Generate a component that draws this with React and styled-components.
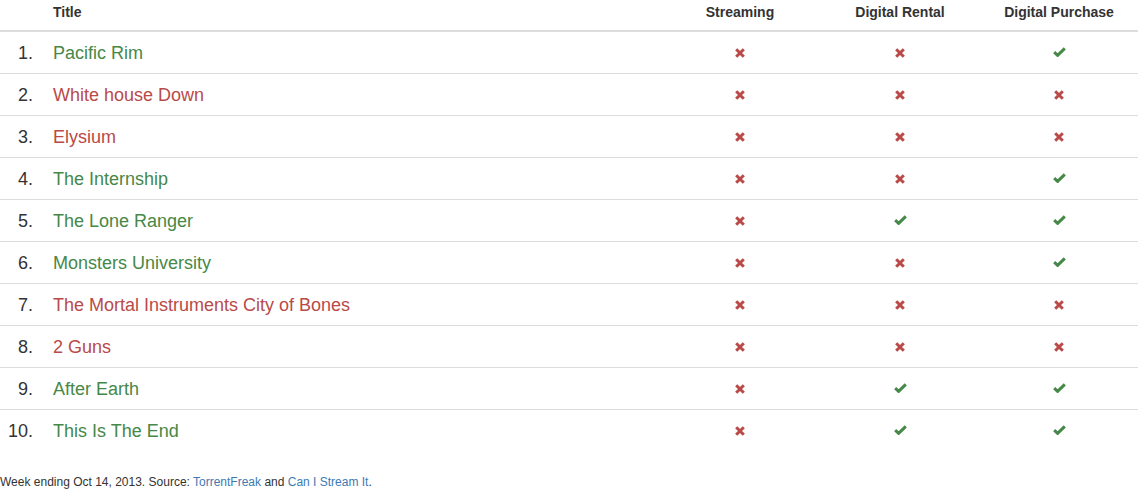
import styled, { createGlobalStyle } from "styled-components";

const movies = [
  { title: "Pacific Rim", streaming: false, rental: false, purchase: true },
  { title: "White house Down", streaming: false, rental: false, purchase: false },
  { title: "Elysium", streaming: false, rental: false, purchase: false },
  { title: "The Internship", streaming: false, rental: false, purchase: true },
  { title: "The Lone Ranger", streaming: false, rental: true, purchase: true },
  { title: "Monsters University", streaming: false, rental: false, purchase: true },
  { title: "The Mortal Instruments City of Bones", streaming: false, rental: false, purchase: false },
  { title: "2 Guns", streaming: false, rental: false, purchase: false },
  { title: "After Earth", streaming: false, rental: true, purchase: true },
  { title: "This Is The End", streaming: false, rental: true, purchase: true },
];

const GREEN = "#468847";
const RED = "#b94a48";

const Mark = ({ ok }) =>
  ok ? (
    <CheckIcon viewBox="0 0 13 10" width="13" height="10">
      <polyline points="1.2,5.2 4.6,8.4 11.8,1.4" fill="none" stroke={GREEN} strokeWidth="3" />
    </CheckIcon>
  ) : (
    <CrossIcon viewBox="0 0 10 10" width="10" height="10">
      <path d="M1.2 1.2 L8.8 8.8 M8.8 1.2 L1.2 8.8" stroke={RED} strokeWidth="3" />
    </CrossIcon>
  );

const App = () => {
  return (
    <>
      <GlobalStyle />
      <Page>
        <Table>
          <colgroup>
            <col style={{ width: 45 }} />
            <col />
            <col style={{ width: 160 }} />
            <col style={{ width: 160 }} />
            <col style={{ width: 158 }} />
          </colgroup>
          <thead>
            <tr>
              <HeadCell />
              <HeadCell>Title</HeadCell>
              <HeadCell $center>Streaming</HeadCell>
              <HeadCell $center>Digital Rental</HeadCell>
              <HeadCell $center>Digital Purchase</HeadCell>
            </tr>
          </thead>
          <tbody>
            {movies.map((m, i) => {
              const available = m.streaming || m.rental || m.purchase;
              return (
                <Row key={m.title}>
                  <RankCell>{i + 1}.</RankCell>
                  <TitleCell $ok={available}>{m.title}</TitleCell>
                  <MarkCell>
                    <Mark ok={m.streaming} />
                  </MarkCell>
                  <MarkCell>
                    <Mark ok={m.rental} />
                  </MarkCell>
                  <MarkCell>
                    <Mark ok={m.purchase} />
                  </MarkCell>
                </Row>
              );
            })}
          </tbody>
        </Table>
        <Footnote>
          Week ending Oct 14, 2013. Source: <Link href="#">TorrentFreak</Link> and{" "}
          <Link href="#">Can I Stream It</Link>.
        </Footnote>
      </Page>
    </>
  );
};

const GlobalStyle = createGlobalStyle`
  body {
    margin: 0;
    background: #fff;
    color: #333;
    font-family: "Liberation Sans", Arial, sans-serif;
  }
`;

const Page = styled.div`
  width: 1138px;
`;

const Table = styled.table`
  width: 1138px;
  table-layout: fixed;
  border-collapse: collapse;
  border-spacing: 0;
`;

const HeadCell = styled.th`
  height: 30px;
  box-sizing: border-box;
  padding: 3px 8px 9px;
  font-size: 14px;
  line-height: 18px;
  font-weight: 700;
  color: #333;
  text-align: ${(props) => (props.$center ? "center" : "left")};
  vertical-align: top;
  border-bottom: 2px solid #ddd;
`;

const Row = styled.tr`
  & + & > td {
    border-top: 1px solid #ddd;
  }
`;

const Cell = styled.td`
  height: 41px;
  padding: 0 8px;
  font-size: 18px;
  line-height: 20px;
  vertical-align: middle;
`;

const RankCell = styled(Cell)`
  text-align: right;
  padding-right: 12px;
  color: #333;
`;

const TitleCell = styled(Cell)`
  color: ${(props) => (props.$ok ? GREEN : RED)};
`;

const MarkCell = styled(Cell)`
  text-align: center;
  line-height: 0;
`;

const CrossIcon = styled.svg`
  display: inline-block;
  vertical-align: middle;
`;

const CheckIcon = styled.svg`
  display: inline-block;
  vertical-align: middle;
  margin-top: -2px;
`;

const Footnote = styled.p`
  margin: 22px 0 0;
  font-size: 12px;
  line-height: 18px;
  color: #333;
`;

const Link = styled.a`
  color: #3d7ab3;
  text-decoration: none;
`;

export default App;
